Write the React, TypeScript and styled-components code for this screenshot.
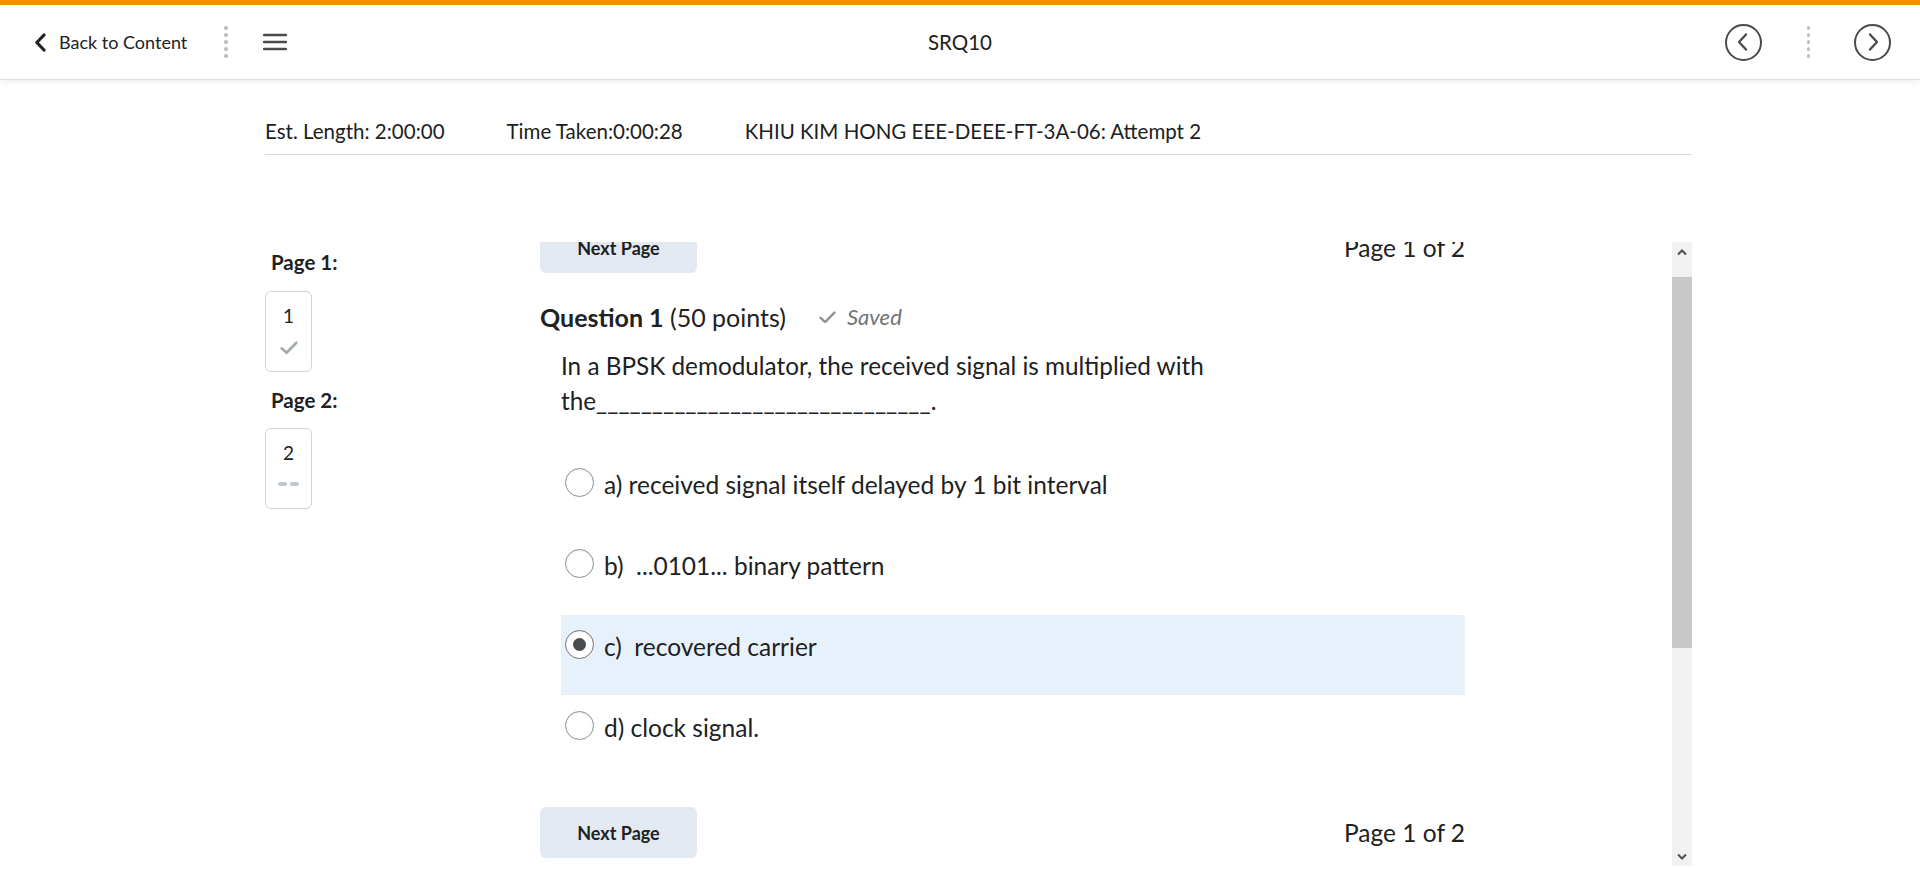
import React, { useLayoutEffect, useRef } from "react";
import styled, { createGlobalStyle } from "styled-components";

const Global = createGlobalStyle`
  html, body { margin: 0; padding: 0; background: #ffffff; }
  body { font-family: Lato, "Noto Sans", "Liberation Sans", sans-serif; color: #202122; }
  * { box-sizing: border-box; }
`;

const Header = styled.header`
  height: 80px;
  border-top: 5px solid #f39200;
  background: #fff;
  border-bottom: 1px solid #dcdcdc;
  box-shadow: 0 2px 6px rgba(0, 0, 0, 0.07);
  display: grid;
  grid-template-columns: 1fr auto 1fr;
  align-items: center;
`;

const HeaderLeft = styled.div`
  display: flex;
  align-items: center;
  padding-left: 33px;
`;

const BackLink = styled.a`
  display: flex;
  align-items: center;
  gap: 11px;
  font-size: 18px;
  color: #202122;
  text-decoration: none;
`;

const DotsWrap = styled.div<{ $ml: number; $mr: number }>`
  display: flex;
  flex-direction: column;
  gap: 3.5px;
  margin-left: ${(p) => p.$ml}px;
  margin-right: ${(p) => p.$mr}px;
`;

const Dot = styled.span`
  width: 3.5px;
  height: 3.5px;
  border-radius: 50%;
  background: #b8bfc5;
`;

const Title = styled.div`
  font-size: 20.5px;
  color: #202122;
  text-align: center;
`;

const HeaderRight = styled.div`
  display: flex;
  align-items: center;
  justify-content: flex-end;
  padding-right: 29px;
`;

const CircleBtn = styled.button`
  width: 37px;
  height: 37px;
  border-radius: 50%;
  border: 2.2px solid #494c4e;
  background: #fff;
  display: flex;
  align-items: center;
  justify-content: center;
  padding: 0;
`;

const PageWrap = styled.div`
  margin-left: 265px;
  width: 1427px;
`;

const InfoBar = styled.div`
  height: 75px;
  display: flex;
  align-items: flex-end;
  gap: 62px;
  padding-bottom: 11px;
  border-bottom: 1px solid #d3d9e3;
  font-size: 20.5px;
  line-height: 24px;
`;

const Body = styled.div`
  margin-top: 87px;
  display: flex;
`;

const Sidebar = styled.aside`
  width: 275px;
  flex: none;
`;

const PageLabel = styled.div<{ $mt: number }>`
  font-weight: 700;
  font-size: 20.5px;
  line-height: 24px;
  padding-left: 6px;
  margin-top: ${(p) => p.$mt}px;
`;

const PageBox = styled.div<{ $mt: number }>`
  width: 47px;
  height: 81px;
  margin-top: ${(p) => p.$mt}px;
  border: 1px solid #cdd5dc;
  border-radius: 6px;
  display: flex;
  flex-direction: column;
  align-items: center;
  padding-top: 12px;
  gap: 13px;
  font-size: 19px;
  line-height: 24px;
`;

const Dash = styled.div`
  display: flex;
  gap: 3px;
  margin-top: 4px;
  span {
    width: 9px;
    height: 3.5px;
    border-radius: 2px;
    background: #c0c7cd;
  }
`;

const ScrollArea = styled.div`
  flex: 1;
  display: flex;
  height: 624px;
`;

const Viewport = styled.div`
  flex: 1;
  overflow: hidden;
`;

const Content = styled.div`
  width: 925px;
  padding-bottom: 140px;
`;

const NavRow = styled.div<{ $mt?: number }>`
  display: flex;
  align-items: center;
  justify-content: space-between;
  margin-top: ${(p) => p.$mt ?? 0}px;
`;

const NextBtn = styled.button`
  width: 157px;
  height: 51px;
  border: none;
  border-radius: 6px;
  background: #e3e9f1;
  font-family: Lato, "Noto Sans", sans-serif;
  font-weight: 700;
  font-size: 18px;
  color: #202122;
`;

const PageCount = styled.div`
  font-size: 24.5px;
  color: #202122;
`;

const QHeading = styled.div`
  margin-top: 29px;
  display: flex;
  align-items: center;
  font-size: 25px;
  line-height: 30px;
  b { font-weight: 700; }
`;

const Saved = styled.span`
  display: flex;
  align-items: center;
  gap: 11px;
  margin-left: 33px;
  font-size: 22px;
  font-style: italic;
  color: #6e7477;
`;

const QText = styled.div`
  margin-top: 16px;
  padding-left: 21px;
  width: 700px;
  font-size: 24.3px;
  line-height: 35px;
`;

const Options = styled.div`
  margin-top: 35px;
  margin-left: 21px;
  width: 904px;
  display: flex;
  flex-direction: column;
  gap: 1px;
`;

const OptionRow = styled.label<{ $selected?: boolean }>`
  height: 80px;
  display: flex;
  align-items: flex-start;
  padding: 14px 0 0 4px;
  gap: 10px;
  background: ${(p) => (p.$selected ? "#e7f1fc" : "transparent")};
  font-size: 24.5px;
  line-height: 36px;
`;

const Radio = styled.span<{ $checked?: boolean }>`
  width: 29px;
  height: 29px;
  margin-top: 1px;
  flex: none;
  border-radius: 50%;
  border: 1px solid ${(p) => (p.$checked ? "#6f7478" : "#8a8f93")};
  background: #fff;
  box-shadow: inset 0 1px 2px rgba(0, 0, 0, 0.08);
  display: flex;
  align-items: center;
  justify-content: center;
  &::after {
    content: "";
    width: 13px;
    height: 13px;
    border-radius: 50%;
    background: #494c4e;
    display: ${(p) => (p.$checked ? "block" : "none")};
  }
`;

const FakeScrollbar = styled.div`
  width: 20px;
  flex: none;
  background: #f1f1f1;
  display: flex;
  flex-direction: column;
`;

const ScrollBtn = styled.div`
  height: 20px;
  flex: none;
  display: flex;
  align-items: center;
  justify-content: center;
`;

const Track = styled.div`
  flex: 1;
  padding-top: 15px;
`;

const Thumb = styled.div`
  height: 371px;
  background: #c8c8c8;
`;

const DotDivider = ({ ml, mr }: { ml: number; mr: number }) => (
  <DotsWrap $ml={ml} $mr={mr}>
    {[0, 1, 2, 3, 4].map((i) => (
      <Dot key={i} />
    ))}
  </DotsWrap>
);

const Check = ({ w, color }: { w: number; color: string }) => (
  <svg width={w} height={w * 0.75} viewBox="0 0 16 12" fill="none">
    <path d="M1.5 6.5 L5.8 10.5 L14.5 1.5" stroke={color} strokeWidth="2.4" strokeLinecap="round" strokeLinejoin="round" />
  </svg>
);

const options = [
  { key: "a", label: "a)", text: " received signal itself delayed by 1 bit interval" },
  { key: "b", label: "b)", text: "\u00a0\u00a0...0101... binary pattern" },
  { key: "c", label: "c)", text: "\u00a0\u00a0recovered carrier", selected: true },
  { key: "d", label: "d)", text: " clock signal." },
];

export default function App() {
  const vp = useRef<HTMLDivElement>(null);
  useLayoutEffect(() => {
    if (vp.current) vp.current.scrollTop = 20;
  }, []);

  return (
    <>
      <Global />
      <Header>
        <HeaderLeft>
          <BackLink href="#">
            <svg width="15" height="19" viewBox="0 0 15 19" fill="none">
              <path d="M11 2 L3.8 9.5 L11 17" stroke="#202122" strokeWidth="3.2" strokeLinecap="round" strokeLinejoin="round" />
            </svg>
            Back to Content
          </BackLink>
          <DotDivider ml={37} mr={35} />
          <svg width="24" height="18" viewBox="0 0 24 18" fill="none">
            <path d="M1 2 H23 M1 9 H23 M1 16 H23" stroke="#494c4e" strokeWidth="2.4" strokeLinecap="round" />
          </svg>
        </HeaderLeft>
        <Title>SRQ10</Title>
        <HeaderRight>
          <CircleBtn aria-label="Previous">
            <svg width="16" height="20" viewBox="0 0 16 20" fill="none">
              <path d="M11 2.5 L4 10 L11 17.5" stroke="#494c4e" strokeWidth="2.4" strokeLinecap="round" strokeLinejoin="round" />
            </svg>
          </CircleBtn>
          <DotDivider ml={45} mr={44} />
          <CircleBtn aria-label="Next">
            <svg width="16" height="20" viewBox="0 0 16 20" fill="none">
              <path d="M5 2.5 L12 10 L5 17.5" stroke="#494c4e" strokeWidth="2.4" strokeLinecap="round" strokeLinejoin="round" />
            </svg>
          </CircleBtn>
        </HeaderRight>
      </Header>

      <PageWrap>
        <InfoBar>
          <span>Est. Length: 2:00:00</span>
          <span>Time Taken:0:00:28</span>
          <span>KHIU KIM HONG EEE-DEEE-FT-3A-06: Attempt 2</span>
        </InfoBar>

        <Body>
          <Sidebar>
            <PageLabel $mt={8}>Page 1:</PageLabel>
            <PageBox $mt={17}>
              <span>1</span>
              <Check w={18} color="#a3abb1" />
            </PageBox>
            <PageLabel $mt={16}>Page 2:</PageLabel>
            <PageBox $mt={16}>
              <span>2</span>
              <Dash>
                <span />
                <span />
              </Dash>
            </PageBox>
          </Sidebar>

          <ScrollArea>
            <Viewport ref={vp}>
              <Content>
                <NavRow>
                  <NextBtn>Next Page</NextBtn>
                  <PageCount>Page 1 of 2</PageCount>
                </NavRow>

                <QHeading>
                  <span>
                    <b>Question 1</b> (50 points)
                  </span>
                  <Saved>
                    <Check w={17} color="#90989d" />
                    Saved
                  </Saved>
                </QHeading>

                <QText>
                  In a BPSK demodulator, the received signal is multiplied with the______________________________.
                </QText>

                <Options>
                  {options.map((o) => (
                    <OptionRow key={o.key} $selected={o.selected}>
                      <Radio $checked={o.selected} />
                      <span>
                        {o.label}
                        {o.text}
                      </span>
                    </OptionRow>
                  ))}
                </Options>

                <NavRow $mt={31}>
                  <NextBtn>Next Page</NextBtn>
                  <PageCount>Page 1 of 2</PageCount>
                </NavRow>
              </Content>
            </Viewport>
            <FakeScrollbar>
              <ScrollBtn>
                <svg width="10" height="7" viewBox="0 0 10 7">
                  <path d="M1 5.5 L5 1.5 L9 5.5" stroke="#505050" strokeWidth="2" fill="none" />
                </svg>
              </ScrollBtn>
              <Track>
                <Thumb />
              </Track>
              <ScrollBtn>
                <svg width="10" height="7" viewBox="0 0 10 7">
                  <path d="M1 1.5 L5 5.5 L9 1.5" stroke="#505050" strokeWidth="2" fill="none" />
                </svg>
              </ScrollBtn>
            </FakeScrollbar>
          </ScrollArea>
        </Body>
      </PageWrap>
    </>
  );
}
